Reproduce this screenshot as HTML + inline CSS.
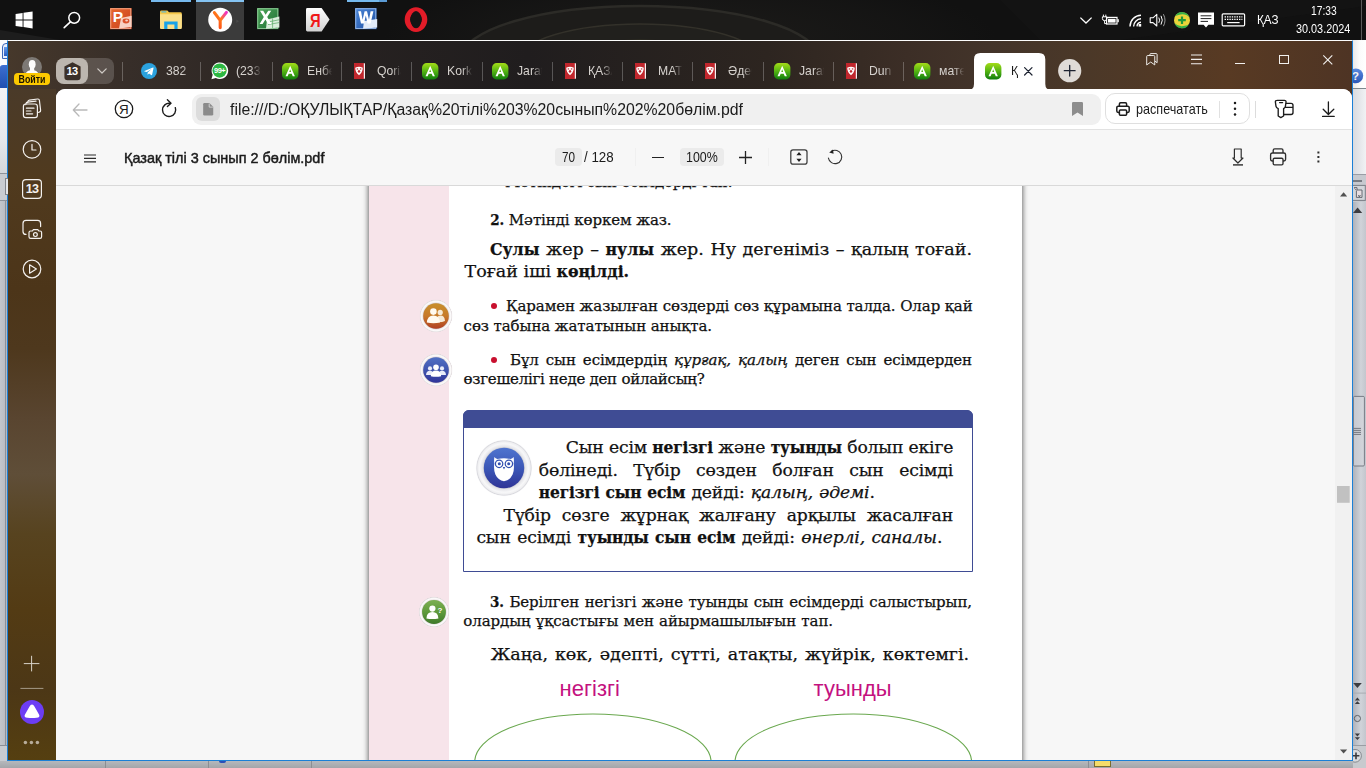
<!DOCTYPE html>
<html lang="kk">
<head>
<meta charset="utf-8">
<title>Қазақ тілі 3 сынып 2 бөлім.pdf</title>
<style>
*{box-sizing:border-box;margin:0;padding:0}
html,body{width:1366px;height:768px;overflow:hidden;background:#aeb2b8;font-family:"Liberation Sans",sans-serif;}
.abs{position:absolute}
#root{position:absolute;left:0;top:0;width:1366px;height:768px;overflow:hidden}
.ui{position:absolute;white-space:nowrap;font-family:"Liberation Sans",sans-serif;color:#1b1b1b;transform-origin:0 50%}
.ic{position:absolute;overflow:visible}
/* ---------- background windows (Word behind) ---------- */
#bgleft{left:0;top:40px;width:8px;height:728px;background:linear-gradient(90deg,#c4c8cf,#b4b8bf)}
#bgright{left:1353px;top:40px;width:13px;height:728px;background:linear-gradient(90deg,#aeb2ba,#d0d3d9 60%,#c3c6cd)}
#bgbottom{left:0;top:761px;width:1366px;height:7px;background:linear-gradient(180deg,#b5b8bc,#a3a6aa)}
/* ---------- taskbar ---------- */
#taskbar{left:0;top:0;width:1366px;height:40px;background:#111111;overflow:hidden}
#taskbar .glow{left:380px;top:-30px;width:620px;height:140px;border-radius:50%;background:radial-gradient(ellipse at center,rgba(40,38,34,.5),rgba(30,29,27,.3) 50%,rgba(17,17,17,0) 70%)}
/* ---------- browser window ---------- */
#win{left:7px;top:40px;width:1346px;height:721px;background:#3a2f28;border-left:1px solid #1a7fd6;border-right:1px solid #1a7fd6;border-bottom:1px solid #1a7fd6;border-top:1px solid #fdfdfd;overflow:hidden}
#chrome{left:0;top:0;width:1344px;height:719px;background:
 linear-gradient(90deg,#46382b 0px,#372e29 120px,#272221 330px,#201d1e 520px,#2d2520 760px,#3c2e26 900px,#43342a 980px,#4b3828 1080px,#583a23 1220px,#4e3424 1344px)}
#side{left:0;top:48px;width:48px;height:671px;background:linear-gradient(180deg,#4a3a29 0,#503a1e 90px,#4c3519 200px,#4e381d 260px,#594530 330px,#5f4e38 385px,#57431f 445px,#533b14 520px,#4c3716 600px,#553f10 671px)}
#content{left:48px;top:48px;width:1296px;height:671px;background:#f7f7f7;border-top-left-radius:9px;border-top-right-radius:9px;overflow:hidden}
#toolbar{left:0;top:0;width:1296px;height:41px;background:#ffffff;border-bottom:1px solid #e2e2e2}
#pdfbar{left:0;top:41px;width:1296px;height:56px;background:#f7f7f7;border-bottom:1px solid #d9d9d9}
#viewer{left:0;top:97px;width:1296px;height:574px;background:#f7f7f7;overflow:hidden}
</style>
</head>
<body>
<div id="root">
<div id="bgleft" class="abs"></div>
<div id="bgright" class="abs"></div>
<div id="bgbottom" class="abs"></div>

<div id="taskbar" class="abs"><div class="glow abs"></div>
<svg class="ic" style="left:0;top:0;overflow:hidden" width="1366" height="40" viewBox="0 0 1366 40"><g fill="none"><ellipse cx="640" cy="58" rx="178" ry="52" fill="#1d1c1a" stroke="#2c2b27" stroke-width="2.5"/><ellipse cx="640" cy="60" rx="120" ry="36" fill="#21201d" stroke="#33312a" stroke-width="1.5"/><ellipse cx="640" cy="62" rx="70" ry="22" fill="#24231e" stroke="#363327" stroke-width="1.2"/><path d="M0,30 L60,40 H0Z" fill="#1d1d1d"/><path d="M1000,0 L1366,0 L1366,6 L1120,40 L1040,40Z" fill="#161616" opacity=".6"/></g></svg>

<!-- active indicators -->
<div class="abs" style="left:151px;top:0;width:40px;height:2px;background:#76b9ed"></div>
<div class="abs" style="left:196px;top:0;width:48px;height:40px;background:#3b3b3b"></div>
<div class="abs" style="left:196px;top:0;width:48px;height:2px;background:#84c3f2"></div>
<div class="abs" style="left:347px;top:0;width:31.5px;height:2px;background:#76b9ed"></div>
<div class="abs" style="left:378.5px;top:0;width:8.5px;height:2px;background:#5b9bd5"></div>
<svg class="ic" style="left:0;top:0" width="1366" height="40" viewBox="0 0 1366 40">
 <!-- windows logo -->
 <g fill="#fff"><path d="M15.6,13.9 L22.6,12.9 V19.5 H15.6Z M23.5,12.8 L32.6,11.5 V19.5 H23.5Z M15.6,20.4 H22.6 V27 L15.6,26Z M23.5,20.4 H32.6 V28.4 L23.5,27.1Z"/></g>
 <!-- search -->
 <circle cx="74.2" cy="17.8" r="5.4" fill="none" stroke="#fff" stroke-width="1.5"/><path d="M70.4,21.8 L64.2,27.6" stroke="#fff" stroke-width="1.6" stroke-linecap="round"/>
 <!-- powerpoint -->
 <defs>
  <linearGradient id="ppg" x1="0" y1="0" x2="1" y2="1"><stop offset="0" stop-color="#e8682e"/><stop offset="1" stop-color="#c8401c"/></linearGradient>
  <linearGradient id="xlg" x1="0" y1="0" x2="1" y2="1"><stop offset="0" stop-color="#4ea65a"/><stop offset="1" stop-color="#1d6e34"/></linearGradient>
  <linearGradient id="wdg" x1="0" y1="0" x2="1" y2="1"><stop offset="0" stop-color="#4a86d8"/><stop offset="1" stop-color="#1f4fa0"/></linearGradient>
  <linearGradient id="yag" x1="0" y1="0" x2="0" y2="1"><stop offset="0" stop-color="#ffffff"/><stop offset="1" stop-color="#d2d2d2"/></linearGradient>
  <linearGradient id="yyg" x1="0" y1="1" x2="1" y2="0"><stop offset="0" stop-color="#ff3a1a"/><stop offset=".55" stop-color="#ff7a1a"/><stop offset="1" stop-color="#f030c8"/></linearGradient>
 </defs>
 <rect x="110" y="8" width="21.6" height="21.2" fill="url(#ppg)"/>
 <rect x="110.8" y="8.8" width="20" height="19.6" fill="none" stroke="#f6b59a" stroke-width=".8"/>
 <path d="M121,18 L131.6,15.8 V27 L119,28.6Z" fill="#f7d2c4"/>
 <ellipse cx="126" cy="21" rx="3.4" ry="2.4" fill="#d9532c"/><ellipse cx="126.6" cy="20.6" rx="1.4" ry="1" fill="#f7d2c4"/>
 <text x="118" y="22.4" text-anchor="middle" font-family="Liberation Sans,sans-serif" font-size="15.5" font-weight="bold" fill="#fff">P</text>
 <!-- explorer -->
 <path d="M160,12 Q160,10.6 161.4,10.6 H167.4 L169,12.2 H180.4 Q181.8,12.2 181.8,13.6 V27.4 H160Z" fill="#f5c84b"/>
 <path d="M160,14.2 H181.8 V28 Q181.8,29 180.8,29 H161 Q160,29 160,28Z" fill="#fbe08a"/>
 <path d="M164.2,29 V21.4 H177.6 V29 H174.4 V24.6 H167.4 V29Z" fill="#18a3e8"/>
 <rect x="161.4" y="11.4" width="5" height="1" fill="#3fb3e8"/>
 <!-- yandex browser -->
 <circle cx="220.2" cy="19.8" r="12" fill="#fff"/>
 <path d="M214.4,12.6 L220.2,20.4 V27.6 M220.2,20.4 L226.4,12.4" fill="none" stroke="url(#yyg)" stroke-width="3.1" stroke-linecap="round" stroke-linejoin="round"/>
 <path d="M236.4,19.4 L239,21.2 L236.4,23Z" fill="#4a4a4a"/>
 <!-- excel -->
 <rect x="257" y="8" width="21.6" height="21.2" fill="url(#xlg)"/>
 <rect x="257.8" y="8.8" width="20" height="19.6" fill="none" stroke="#9fd3a6" stroke-width=".8"/>
 <path d="M267,19.4 L279.4,16.6 V27.4 L266,28.8Z" fill="#d8eedb"/>
 <path d="M268,22 L279,19.8 M268,24.6 L279,22.6 M272.6,18.4 V28" stroke="#57a866" stroke-width=".7"/>
 <path d="M260,10.8 L263.2,10.8 L265.6,14.8 L268.2,10.8 L271.2,10.8 L267.2,17 L271.6,24 L268.2,24 L265.4,19.4 L262.6,24 L259.6,24 L263.8,17Z" fill="#fff"/>
 <!-- yandex Ya -->
 <path d="M307.4,8 H321.6 L329.6,19.6 L321.6,31.4 H307.4 Q306,31.4 306,30 V9.4 Q306,8 307.4,8Z" fill="url(#yag)"/>
 <text x="315.4" y="26.6" text-anchor="middle" font-family="Liberation Sans,sans-serif" font-size="18.5" fill="#f01818" font-weight="bold" transform="translate(315.4 0) scale(.8 1) translate(-315.4 0)">Я</text>
 <!-- word -->
 <rect x="355" y="8" width="21.6" height="21.2" fill="url(#wdg)"/>
 <rect x="355.8" y="8.8" width="20" height="19.6" fill="none" stroke="#a9c6ee" stroke-width=".8"/>
 <path d="M364,21 L377.2,19 V27.6 L363,28.8Z" fill="#e2ebf8"/>
 <path d="M358.2,11.2 H361 L362.6,19.8 L364.6,11.2 H367 L369,19.8 L370.6,11.2 H373.4 L370.6,23.4 H367.6 L365.8,15.6 L364,23.4 H361Z" fill="#fff"/>
 <!-- opera -->
 <ellipse cx="416" cy="19.6" rx="8.6" ry="9.6" fill="none" stroke="#e31c28" stroke-width="5.4"/>
 <ellipse cx="416" cy="19.6" rx="5.4" ry="8.6" fill="#151515"/>
 <!-- tray -->
 <path d="M1080.4,17.6 L1086,23 L1091.6,17.6" fill="none" stroke="#fff" stroke-width="1.3"/>
 <!-- battery -->
 <rect x="1106.6" y="17.4" width="10.4" height="6.6" fill="none" stroke="#fff" stroke-width="1.2"/><rect x="1117.4" y="19.2" width="1.4" height="3" fill="#fff"/><rect x="1108" y="18.8" width="7.6" height="3.8" fill="#fff"/>
 <path d="M1103.4,14.6 V16.8 M1105.8,14.6 V16.8 M1102.4,16.8 H1106.8 V18.6 Q1106.8,20.6 1104.6,20.6 Q1102.4,20.6 1102.4,18.6Z M1104.6,20.6 V23.6 H1107" fill="none" stroke="#fff" stroke-width="1"/>
 <!-- network -->
 <g fill="none" stroke="#fff" stroke-width="1.4"><path d="M1130,26.4 A11.4,11.4 0 0 1 1141,15.2"/><path d="M1133.6,26.4 A7.8,7.8 0 0 1 1141,18.8"/><path d="M1137,26.4 A4.4,4.4 0 0 1 1141,22.2"/></g><rect x="1138.6" y="24" width="2.6" height="2.6" fill="#fff"/>
 <!-- volume -->
 <path d="M1150.2,17.8 H1153 L1156.8,14.4 V26 L1153,22.6 H1150.2Z" fill="none" stroke="#fff" stroke-width="1.1" stroke-linejoin="round"/>
 <g fill="none" stroke="#fff" stroke-width="1"><path d="M1158.8,17.6 Q1160.4,20.2 1158.8,22.8"/><path d="M1161,15.8 Q1163.6,20.2 1161,24.6"/><path d="M1163.4,14.2 Q1166.6,20.2 1163.4,26.2" stroke="#9a9a9a"/></g>
 <!-- 360 -->
 <circle cx="1182" cy="20.2" r="8" fill="#e9d43a"/><path d="M1175.2,16 A8,8 0 0 1 1189.6,17.4 Q1186,13.6 1180.6,14.4 Q1177.4,15 1175.2,16Z" fill="#36b24a"/><path d="M1188.8,24.4 A8,8 0 0 1 1174.4,23 Q1178,26.8 1183.4,26 Q1186.6,25.4 1188.8,24.4Z" fill="#36b24a"/>
 <path d="M1178.2,20.2 H1185.8 M1182,16.4 V24" stroke="#1f9a3a" stroke-width="2.2"/>
 <!-- notification -->
 <path d="M1198,12.4 H1214 V24.8 H1208.4 L1206,27.6 L1203.6,24.8 H1198Z" fill="#fff"/>
 <path d="M1200.6,15.8 H1211.4 M1200.6,18.6 H1211.4 M1200.6,21.4 H1208" stroke="#222" stroke-width="1"/>
 <!-- keyboard -->
 <rect x="1222.2" y="13.8" width="22.4" height="12" rx="1" fill="none" stroke="#fff" stroke-width="1.2"/>
 <path d="M1224.6,16.8 H1242.4 M1224.6,19.4 H1242.4" stroke="#fff" stroke-width="1.2" stroke-dasharray="1.4 1"/><path d="M1227.2,22.6 H1239.6" stroke="#fff" stroke-width="1.2"/>
 <rect x="1361" y="0" width="1" height="40" fill="#5a5a5a"/>
</svg>
<div class="ui" style="left:1257.2px;top:10px;font-size:12.4px;line-height:20px;color:#fff;transform:scaleX(.94)">ҚАЗ</div>
<div class="ui" style="left:1311px;top:1.4px;font-size:12.2px;line-height:20px;color:#fff;transform:scaleX(.84)">17:33</div>
<div class="ui" style="left:1296.4px;top:18.6px;font-size:12.2px;line-height:20px;color:#fff;transform:scaleX(.89)">30.03.2024</div>

</div>

<div id="win" class="abs">
 <div id="chrome" class="abs"></div>
 
<style>
.tabt{position:absolute;top:20.9px;height:18px;line-height:18px;font-size:12.6px;font-family:"Liberation Sans",sans-serif;white-space:nowrap;overflow:hidden;transform:scaleX(.97);transform-origin:0 50%;-webkit-mask-image:linear-gradient(90deg,#000 60%,transparent 100%);mask-image:linear-gradient(90deg,#000 60%,transparent 100%)}
</style>
<svg width="0" height="0" style="position:absolute"><defs><linearGradient id="ga" x1="0" y1="0" x2="0" y2="1"><stop offset="0" stop-color="#a4dc18"/><stop offset=".45" stop-color="#5cb814"/><stop offset="1" stop-color="#0f7e0c"/></linearGradient></defs></svg>
<!-- avatar -->
<svg class="ic" style="left:14px;top:15.5px" width="20" height="20" viewBox="-10 -10 20 20"><circle r="10" fill="#7d7975"/><clipPath id="avc"><circle r="10"/></clipPath><g clip-path="url(#avc)" fill="#fdfdfd"><ellipse cx="0.2" cy="-2.8" rx="3.4" ry="4.3"/><path d="M-2,0 H2.2 V3.2 Q6.8,4.2 7.4,10 H-7.4 Q-6.8,4.2 -2,3.2Z"/></g></svg>
<div class="abs" style="left:6px;top:32.4px;width:36px;height:11.4px;background:#fcc900;border-radius:4px"></div>
<div class="abs" style="left:1px;top:32.3px;width:46px;height:13px;text-align:center;font:bold 10.5px/13px 'Liberation Sans',sans-serif;color:#1a1300;transform:scaleX(.84)">Войти</div>
<!-- 13 group pill -->
<div class="abs" style="left:48.4px;top:16.9px;width:57.6px;height:26.2px;border-radius:8px;background:rgba(255,255,255,.17)"></div>
<div class="abs" style="left:48.4px;top:16.9px;width:31.6px;height:26.2px;border-radius:8px;background:#bcb6af"></div>
<svg class="ic" style="left:55.6px;top:20.6px" width="17" height="18.4" viewBox="0 0 17 18.4"><path d="M8.5,0.2 L16.6,4.4 V15 Q16.6,18.2 13.4,18.2 H3.6 Q0.4,18.2 0.4,15 V4.4Z" fill="#3b3029"/></svg>
<div class="abs" style="left:53px;top:22.3px;width:22px;height:16px;text-align:center;font:bold 11px/16px 'Liberation Sans',sans-serif;color:#fff;letter-spacing:-.6px">13</div>
<svg class="ic" style="left:89.4px;top:27px" width="10" height="6" viewBox="0 0 10 6" fill="none" stroke="#cfcac5" stroke-width="1.2" stroke-linecap="round" stroke-linejoin="round"><path d="M0.8,0.8 L5,5 L9.2,0.8"/></svg>
<div class="abs" style="left:114.4px;top:21px;width:1px;height:19px;background:rgba(255,255,255,.25)"></div><svg class="ic" style="left:133px;top:21.8px" width="16" height="16" viewBox="-8 -8 16 16"><circle r="8" fill="#2ba2de"/><path d="M-4.6,0.1 L4,-3.4 Q4.7,-3.6 4.5,-2.7 L3.1,3.7 Q2.9,4.4 2.2,4 L0,2.4 L-1.1,3.5 Q-1.5,3.8 -1.5,3.2 L-1.3,1.4 L2.6,-2.1 L-2.2,0.9 L-4.5,0.6 Q-5,0.3 -4.6,0.1Z" fill="#fff"/></svg><div class="tabt" style="left:157.9px;width:28px;color:#d6d2ce">382</div><div class="abs" style="left:192.4px;top:21px;width:1px;height:19px;background:rgba(255,255,255,.25)"></div><svg class="ic" style="left:202.6px;top:21.4px" width="17.2" height="17.4" viewBox="-8.6 -8.6 17.2 17.4"><path d="M-8.2,8.6 L-6.9,4.2 A8.3,8.3 0 1 1 -3.8,7.3Z" fill="#fff"/><circle r="7.1" fill="#2cb742"/><text x="0" y="2.6" text-anchor="middle" font-family="Liberation Sans,sans-serif" font-size="7.4" font-weight="bold" fill="#fff" letter-spacing="-.4">99+</text></svg><div class="tabt" style="left:228.0px;width:26px;color:#d6d2ce">(233</div><div class="abs" style="left:263.5px;top:21px;width:1px;height:19px;background:rgba(255,255,255,.25)"></div><svg class="ic" style="left:273.8px;top:21.8px" width="16.4" height="16.4" viewBox="0 0 16 16"><rect width="16" height="16" rx="4.6" fill="url(#ga)"/><path d="M8,2.6 L12.6,13 H10.5 L9.5,10.6 H6.5 L5.5,13 H3.4Z M8,6.2 L7.1,8.9 H8.9Z" fill="#fff" fill-rule="evenodd"/></svg><div class="tabt" style="left:299.1px;width:26px;color:#d6d2ce">Енбек</div><div class="abs" style="left:333.0px;top:21px;width:1px;height:19px;background:rgba(255,255,255,.25)"></div><svg class="ic" style="left:345.6px;top:21.9px" width="12" height="16" viewBox="0 0 12 16"><rect width="10.2" height="16" fill="#c1272d"/><rect x="9.8" y="0.3" width="1.2" height="15.4" fill="#f4f4f4"/><rect x="11" y="0.3" width=".6" height="15.4" fill="#3a1414"/><path d="M1.2,4.8 Q5,2.8 8.8,4.8 Q8.6,9.8 5,12.2 Q1.4,9.8 1.2,4.8Z" fill="#fff"/><path d="M5,6.4 L6.5,8.4 L5,10 L3.5,8.4Z M2.6,5.6 L4.4,5.2 L3,7.2Z M7.4,5.6 L5.6,5.2 L7,7.2Z" fill="#c1272d"/></svg><div class="tabt" style="left:368.6px;width:25px;color:#d6d2ce">Qoria</div><div class="abs" style="left:403.4px;top:21px;width:1px;height:19px;background:rgba(255,255,255,.25)"></div><svg class="ic" style="left:413.7px;top:21.8px" width="16.4" height="16.4" viewBox="0 0 16 16"><rect width="16" height="16" rx="4.6" fill="url(#ga)"/><path d="M8,2.6 L12.6,13 H10.5 L9.5,10.6 H6.5 L5.5,13 H3.4Z M8,6.2 L7.1,8.9 H8.9Z" fill="#fff" fill-rule="evenodd"/></svg><div class="tabt" style="left:439.0px;width:26px;color:#d6d2ce">Kork</div><div class="abs" style="left:473.7px;top:21px;width:1px;height:19px;background:rgba(255,255,255,.25)"></div><svg class="ic" style="left:484.0px;top:21.8px" width="16.4" height="16.4" viewBox="0 0 16 16"><rect width="16" height="16" rx="4.6" fill="url(#ga)"/><path d="M8,2.6 L12.6,13 H10.5 L9.5,10.6 H6.5 L5.5,13 H3.4Z M8,6.2 L7.1,8.9 H8.9Z" fill="#fff" fill-rule="evenodd"/></svg><div class="tabt" style="left:509.3px;width:26px;color:#d6d2ce">Jarat</div><div class="abs" style="left:544.0px;top:21px;width:1px;height:19px;background:rgba(255,255,255,.25)"></div><svg class="ic" style="left:556.6px;top:21.9px" width="12" height="16" viewBox="0 0 12 16"><rect width="10.2" height="16" fill="#c1272d"/><rect x="9.8" y="0.3" width="1.2" height="15.4" fill="#f4f4f4"/><rect x="11" y="0.3" width=".6" height="15.4" fill="#3a1414"/><path d="M1.2,4.8 Q5,2.8 8.8,4.8 Q8.6,9.8 5,12.2 Q1.4,9.8 1.2,4.8Z" fill="#fff"/><path d="M5,6.4 L6.5,8.4 L5,10 L3.5,8.4Z M2.6,5.6 L4.4,5.2 L3,7.2Z M7.4,5.6 L5.6,5.2 L7,7.2Z" fill="#c1272d"/></svg><div class="tabt" style="left:579.6px;width:25px;color:#d6d2ce">ҚАЗА</div><div class="abs" style="left:614.0px;top:21px;width:1px;height:19px;background:rgba(255,255,255,.25)"></div><svg class="ic" style="left:626.6px;top:21.9px" width="12" height="16" viewBox="0 0 12 16"><rect width="10.2" height="16" fill="#c1272d"/><rect x="9.8" y="0.3" width="1.2" height="15.4" fill="#f4f4f4"/><rect x="11" y="0.3" width=".6" height="15.4" fill="#3a1414"/><path d="M1.2,4.8 Q5,2.8 8.8,4.8 Q8.6,9.8 5,12.2 Q1.4,9.8 1.2,4.8Z" fill="#fff"/><path d="M5,6.4 L6.5,8.4 L5,10 L3.5,8.4Z M2.6,5.6 L4.4,5.2 L3,7.2Z M7.4,5.6 L5.6,5.2 L7,7.2Z" fill="#c1272d"/></svg><div class="tabt" style="left:649.6px;width:25px;color:#d6d2ce">МАТЕ</div><div class="abs" style="left:684.4px;top:21px;width:1px;height:19px;background:rgba(255,255,255,.25)"></div><svg class="ic" style="left:697.0px;top:21.9px" width="12" height="16" viewBox="0 0 12 16"><rect width="10.2" height="16" fill="#c1272d"/><rect x="9.8" y="0.3" width="1.2" height="15.4" fill="#f4f4f4"/><rect x="11" y="0.3" width=".6" height="15.4" fill="#3a1414"/><path d="M1.2,4.8 Q5,2.8 8.8,4.8 Q8.6,9.8 5,12.2 Q1.4,9.8 1.2,4.8Z" fill="#fff"/><path d="M5,6.4 L6.5,8.4 L5,10 L3.5,8.4Z M2.6,5.6 L4.4,5.2 L3,7.2Z M7.4,5.6 L5.6,5.2 L7,7.2Z" fill="#c1272d"/></svg><div class="tabt" style="left:720.0px;width:25px;color:#d6d2ce">Әдеб</div><div class="abs" style="left:755.2px;top:21px;width:1px;height:19px;background:rgba(255,255,255,.25)"></div><svg class="ic" style="left:765.5px;top:21.8px" width="16.4" height="16.4" viewBox="0 0 16 16"><rect width="16" height="16" rx="4.6" fill="url(#ga)"/><path d="M8,2.6 L12.6,13 H10.5 L9.5,10.6 H6.5 L5.5,13 H3.4Z M8,6.2 L7.1,8.9 H8.9Z" fill="#fff" fill-rule="evenodd"/></svg><div class="tabt" style="left:790.8px;width:26px;color:#d6d2ce">Jarat</div><div class="abs" style="left:825.0px;top:21px;width:1px;height:19px;background:rgba(255,255,255,.25)"></div><svg class="ic" style="left:837.6px;top:21.9px" width="12" height="16" viewBox="0 0 12 16"><rect width="10.2" height="16" fill="#c1272d"/><rect x="9.8" y="0.3" width="1.2" height="15.4" fill="#f4f4f4"/><rect x="11" y="0.3" width=".6" height="15.4" fill="#3a1414"/><path d="M1.2,4.8 Q5,2.8 8.8,4.8 Q8.6,9.8 5,12.2 Q1.4,9.8 1.2,4.8Z" fill="#fff"/><path d="M5,6.4 L6.5,8.4 L5,10 L3.5,8.4Z M2.6,5.6 L4.4,5.2 L3,7.2Z M7.4,5.6 L5.6,5.2 L7,7.2Z" fill="#c1272d"/></svg><div class="tabt" style="left:860.6px;width:25px;color:#d6d2ce">Dun</div><div class="abs" style="left:895.2px;top:21px;width:1px;height:19px;background:rgba(255,255,255,.25)"></div><svg class="ic" style="left:905.5px;top:21.8px" width="16.4" height="16.4" viewBox="0 0 16 16"><rect width="16" height="16" rx="4.6" fill="url(#ga)"/><path d="M8,2.6 L12.6,13 H10.5 L9.5,10.6 H6.5 L5.5,13 H3.4Z M8,6.2 L7.1,8.9 H8.9Z" fill="#fff" fill-rule="evenodd"/></svg><div class="tabt" style="left:930.8px;width:26px;color:#d6d2ce">мате</div>
<svg class="ic" style="left:959.8px;top:11.7px" width="84" height="37" viewBox="0 0 84 37"><path d="M0,37 Q6,37 6,31 V6.4 Q6,0 12.4,0 H70.9 Q77.3,0 77.3,6.4 V31 Q77.3,37 83.3,37 Z" fill="#ffffff"/></svg>
<svg class="ic" style="left:977.0px;top:21.8px" width="16.4" height="16.4" viewBox="0 0 16 16"><rect width="16" height="16" rx="4.6" fill="url(#ga)"/><path d="M8,2.6 L12.6,13 H10.5 L9.5,10.6 H6.5 L5.5,13 H3.4Z M8,6.2 L7.1,8.9 H8.9Z" fill="#fff" fill-rule="evenodd"/></svg><div class="abs" style="left:1002.6px;top:20.6px;font:13.4px/18px 'Liberation Sans',sans-serif;color:#1b1b1b;transform:scaleX(.9);transform-origin:0 50%">Қ</div>
<svg class="ic" style="left:1015.8px;top:25.8px" width="8.6" height="8.6" viewBox="0 0 8.6 8.6" stroke="#1c2230" stroke-width="1.2" stroke-linecap="round"><path d="M0.6,0.6 L8,8 M8,0.6 L0.6,8"/></svg>
<!-- new tab -->
<svg class="ic" style="left:1049.9px;top:17.8px" width="23.4" height="23.4" viewBox="-11.7 -11.7 23.4 23.4"><circle r="11.6" fill="#dfdbd7"/><path d="M-5.4,0 H5.4 M0,-5.4 V5.4" stroke="#1c2230" stroke-width="1.3" stroke-linecap="round"/></svg>
<!-- window controls -->
<svg class="ic" style="left:1137.8px;top:11.6px" width="11.8" height="12.6" viewBox="0 0 14 15" fill="none" stroke="#f2f0ee" stroke-width="1.15" stroke-linejoin="round"><path d="M4.6,3 V1.8 Q4.6,0.7 5.8,0.7 H12 Q13.2,0.7 13.2,1.8 V11.6 L10.6,9.6"/><path d="M0.8,4.2 Q0.8,3 2,3 H9.2 Q10.4,3 10.4,4.2 V14.2 L5.6,10.8 L0.8,14.2Z"/></svg>
<svg class="ic" style="left:1182.6px;top:12.6px" width="11" height="11" viewBox="0 0 11 11" stroke="#f2f0ee" stroke-width="1.1"><path d="M0,1 H11 M0,5.4 H11 M0,9.8 H11"/></svg>
<div class="abs" style="left:1227px;top:22px;width:10px;height:1.1px;background:#f2f0ee"></div>
<div class="abs" style="left:1271.4px;top:13.8px;width:9.4px;height:9.2px;border:1.1px solid #f2f0ee"></div>
<svg class="ic" style="left:1315.2px;top:13.6px" width="9.6" height="9.6" viewBox="0 0 9.6 9.6" stroke="#f2f0ee" stroke-width="1.1"><path d="M0.3,0.3 L9.3,9.3 M9.3,0.3 L0.3,9.3"/></svg>

 <div id="side" class="abs">
 
<svg class="ic" style="left:0;top:0" width="48" height="671" viewBox="8 89 48 671" fill="none" stroke="#f4f1ee" stroke-width="1.2" stroke-linecap="round" stroke-linejoin="round">
 <!-- tabs -->
 <path d="M27.6,102.6 L27.8,101.8 Q28,100.4 29.4,100.2 L37.6,99 Q39.2,98.8 39.4,100.4 L40.6,110.2 Q40.8,111.8 39.2,112.2 L38.6,112.3"/>
 <path d="M25.8,104.6 L26,103.6 Q26.2,102.4 27.6,102.2 L36,101.2"/>
 <rect x="23.4" y="104" width="14" height="13.6" rx="2.4"/>
 <path d="M26.4,108.2 H34 M26.4,111 H31 M26.4,113.8 H32.6"/>
 <!-- clock -->
 <circle cx="32" cy="149.4" r="8.8"/><path d="M32,144.4 V150 H36"/>
 <!-- 13 -->
 <rect x="22.6" y="179.6" width="18.8" height="18.8" rx="3.4"/>
 <!-- screenshot -->
 <path d="M26,234.4 Q23,234.4 23,231.4 V223.4 Q23,220.4 26,220.4 H37.6 Q40.6,220.4 40.6,223.4 V226.6"/>
 <path d="M30.6,231 H32.4 L33.4,229.6 H37.8 L38.8,231 H40 Q41.6,231 41.6,232.6 V236.8 Q41.6,238.4 40,238.4 H30.6 Q29,238.4 29,236.8 V232.6 Q29,231 30.6,231Z"/>
 <circle cx="35.4" cy="234.6" r="1.9"/>
 <!-- play -->
 <circle cx="32" cy="269" r="8.8"/><path d="M29.6,264.8 L36.4,269 L29.6,273.2Z"/>
 <!-- plus -->
 <path d="M24.2,663.6 H39 M31.6,656.2 V671" stroke="#d8d2c8" stroke-width="1"/>
 <path d="M20.8,688.4 H43" stroke="#a59a88" stroke-width="1"/>
</svg>
<div class="abs" style="left:13px;top:90px;width:22px;height:20px;text-align:center;font:bold 12.6px/20px 'Liberation Sans',sans-serif;color:#f4f1ee;letter-spacing:-.7px">13</div>
<svg class="ic" style="left:11.8px;top:611px" width="24" height="24" viewBox="-12 -12 24 24"><circle r="12" fill="#6c3df4"/><path d="M0,-7.4 Q1.4,-7.4 2.6,-5.2 L7,2.6 Q8.6,5.6 4.6,5.8 Q0,6.2 -4.6,5.8 Q-8.6,5.6 -7,2.6 L-2.6,-5.2 Q-1.4,-7.4 0,-7.4Z" fill="#fff"/></svg>
<svg class="ic" style="left:15.4px;top:650.6px" width="18" height="5" viewBox="0 0 18 5" fill="#b7ac9a"><circle cx="2.4" cy="2.4" r="1.75"/><circle cx="8.4" cy="2.4" r="1.75"/><circle cx="14.4" cy="2.4" r="1.75"/></svg>

 </div>
 <div id="content" class="abs">
  <div id="toolbar" class="abs">
  

  <!-- back arrow -->
  <svg class="ic" style="left:16px;top:13px" width="16" height="16" viewBox="0 0 16 16" fill="none" stroke="#b9b9b9" stroke-width="1.3" stroke-linecap="round" stroke-linejoin="round"><path d="M15,8 H1.5 M7,2 L1.3,8 L7,14"/></svg>
  <!-- Ya -->
  <svg class="ic" style="left:58px;top:10px" width="20" height="20" viewBox="-10 -10 20 20"><circle r="8.7" fill="none" stroke="#1b1b1b" stroke-width="1.3"/><text x="-0.2" y="4.7" text-anchor="middle" font-family="Liberation Sans,sans-serif" font-size="13.4" fill="#1b1b1b">Я</text></svg>
  <!-- reload -->
  <svg class="ic" style="left:103px;top:9px" width="20" height="22" viewBox="-10 -11 20 22" fill="none" stroke="#1b1b1b" stroke-width="1.4" stroke-linecap="round" stroke-linejoin="round"><path d="M1.2,-5.6 A6.6,6.6 0 1 0 6.3,-1.4"/><path d="M-1.6,-9.2 L2,-5.7 L-1.6,-2.4"/></svg>
  <!-- url field -->
  <div class="abs" style="left:136px;top:4.5px;width:909px;height:31px;background:#f0f0f0;border-radius:9px"></div>
  <div class="abs" style="left:140px;top:8.3px;width:24px;height:23.6px;background:#dcdcdc;border-radius:6px"></div>
  <svg class="ic" style="left:146.8px;top:13.6px" width="10.4" height="12.6" viewBox="0 0 12 15"><path d="M1.6,0 H7.4 L12,4.6 V13.4 Q12,15 10.4,15 H1.6 Q0,15 0,13.4 V1.6 Q0,0 1.6,0Z" fill="#8b8b8b"/><path d="M7.2,0.6 V4.9 H11.6" fill="none" stroke="#dcdcdc" stroke-width="1"/></svg>
  <div class="ui" id="urltxt" style="left:174.2px;top:10.8px;font-size:16px;line-height:20px;transform:scaleX(.988)">file:///D:/ОҚУЛЫҚТАР/Қазақ%20тілі%203%20сынып%202%20бөлім.pdf</div>
  <svg class="ic" style="left:1016px;top:12.6px" width="11" height="14" viewBox="0 0 11 14"><path d="M1.2,0 H9.8 Q11,0 11,1.2 V14 L5.5,10.4 L0,14 V1.2 Q0,0 1.2,0Z" fill="#8d8d8d"/></svg>
  <!-- print button -->
  <div class="abs" style="left:1049.3px;top:3.8px;width:145.2px;height:31.4px;border:1px solid #dfdfdf;border-radius:10px;background:#fff"></div>
  <svg class="ic" style="left:1060px;top:13px" width="14" height="14" viewBox="0 0 14 14" fill="none" stroke="#1b1b1b" stroke-width="1.5" stroke-linejoin="round"><path d="M3.4,4.2 V2 Q3.4,0.8 4.6,0.8 H9.4 Q10.6,0.8 10.6,2 V4.2"/><path d="M3.4,10.4 H2.2 Q0.8,10.4 0.8,9 V5.6 Q0.8,4.2 2.2,4.2 H11.8 Q13.2,4.2 13.2,5.6 V9 Q13.2,10.4 11.8,10.4 H10.6"/><rect x="3.4" y="8" width="7.2" height="5.2" rx="1"/></svg>
  <div class="ui" id="prtxt" style="left:1079.7px;top:10px;font-size:15px;line-height:20px;transform:scaleX(.84)">распечатать</div>
  <div class="abs" style="left:1162.5px;top:12px;width:1px;height:17px;background:#e1e1e1"></div>
  <svg class="ic" style="left:1176.5px;top:11px" width="4" height="18" viewBox="0 0 4 18" fill="#1b1b1b"><circle cx="2" cy="3" r="1.25"/><circle cx="2" cy="8.8" r="1.25"/><circle cx="2" cy="14.6" r="1.25"/></svg>
  <div class="abs" style="left:1199px;top:12px;width:1px;height:17px;background:#dcdcdc"></div>
  <!-- collections icon -->
  <svg class="ic" style="left:1214px;top:7px" width="30" height="26" viewBox="1270 96 30 26" fill="none" stroke="#1b1b1b" stroke-width="1.35" stroke-linejoin="round" stroke-linecap="round"><path d="M1286,103.4 H1291 Q1293,103.4 1293,105.4 V112.5 Q1293,114.5 1291,114.5 H1283.8 M1285.6,107.3 H1293"/><path d="M1277.4,100.4 H1284.4 Q1286.3,100.4 1286.0,102.2 L1285.4,106.4 Q1285.2,107.8 1283.6,108.6 V116 L1280.8,117.6 L1278.2,116 V108.6 Q1276.2,107.8 1276,106.4 L1275.4,102.2 Q1275.1,100.4 1277.4,100.4 Z" fill="#fff"/><path d="M1279.6,102.6 H1282.6"/></svg>
  <!-- download -->
  <svg class="ic" style="left:1260px;top:7px" width="24" height="26" viewBox="1316 96 24 26" fill="none" stroke="#1b1b1b" stroke-width="1.3" stroke-linecap="round" stroke-linejoin="round"><path d="M1328.4,101.9 V114.3 M1323.2,109.2 L1328.4,114.5 L1333.8,109.2 M1322.6,116.4 H1334.2"/></svg>

  </div>
  <div id="pdfbar" class="abs">
  
  <svg class="ic" style="left:28px;top:23.6px" width="12" height="9" viewBox="0 0 12 9" stroke="#2a2a2a" stroke-width="1.15"><path d="M0,1 H12 M0,4.4 H12 M0,7.8 H12"/></svg>
  <div class="ui" id="ttl" style="left:68.4px;top:17.6px;font-size:14.2px;line-height:20px;-webkit-text-stroke:.45px #1b1b1b;transform:scaleX(1.017)">Қазақ тілі 3 сынып 2 бөлім.pdf</div>
  <div class="abs" style="left:499px;top:18.2px;width:26.6px;height:17.8px;background:#ebebeb;border-radius:4px"></div>
  <div class="ui" id="pg70" style="left:506px;top:17.3px;font-size:14.5px;line-height:20px;transform:scaleX(.81)">70</div>
  <div class="ui" id="pg128" style="left:528.3px;top:17.3px;font-size:14.5px;line-height:20px;word-spacing:0;transform:scaleX(.92)">/ 128</div>
  <div class="abs" style="left:579px;top:18px;width:1px;height:18px;background:#f0f0f0"></div>
  <div class="abs" style="left:596px;top:27px;width:12px;height:1.3px;background:#222"></div>
  <div class="abs" style="left:624px;top:18.2px;width:43.7px;height:17.8px;background:#ebebeb;border-radius:4px"></div>
  <div class="ui" id="zm" style="left:630.3px;top:17.3px;font-size:14.5px;line-height:20px;transform:scaleX(.855)">100%</div>
  <svg class="ic" style="left:683px;top:21px" width="13" height="13" viewBox="0 0 13 13" stroke="#222" stroke-width="1.3"><path d="M0,6.5 H13 M6.5,0 V13"/></svg>
  <div class="abs" style="left:711.5px;top:18px;width:1px;height:18px;background:#f0f0f0"></div>
  <svg class="ic" style="left:733.5px;top:19px" width="18" height="16" viewBox="0 0 18 16"><rect x="0.8" y="0.8" width="16.2" height="14.4" rx="2.2" fill="none" stroke="#3a3a3a" stroke-width="1.25"/><path d="M9,3 L11.6,6.2 H6.4Z M9,13 L11.6,9.8 H6.4Z" fill="#222"/></svg>
  <svg class="ic" style="left:766px;top:14px" width="26" height="26" viewBox="822 144 26 26" fill="none" stroke="#333" stroke-width="1.15" stroke-linecap="round"><path d="M831.4,151.3 A6.7,6.7 0 1 1 828.4,158"/><path d="M833,149.4 L829.2,152.6 L833.6,153.8Z" fill="#222" stroke="none"/></svg>
  <!-- right icons -->
  <svg class="ic" style="left:1170px;top:14px" width="24" height="26" viewBox="1226 144 24 26" fill="none" stroke="#2e2e2e" stroke-width="1.2" stroke-linejoin="round" stroke-linecap="round"><path d="M1234.4,149 H1241.2 V158 H1243 L1237.9,163 L1232.9,158 H1234.4Z"/><path d="M1233,164.9 H1243" stroke="#555" stroke-width="1.6" stroke-linecap="butt"/></svg>
  <svg class="ic" style="left:1208px;top:14px" width="28" height="26" viewBox="1264 144 28 26" fill="none" stroke="#2e2e2e" stroke-width="1.35" stroke-linejoin="round"><path d="M1273.2,153 V150.4 Q1273.2,148.9 1274.7,148.9 H1281.5 Q1283,148.9 1283,150.4 V153"/><path d="M1273.2,161 H1272.4 Q1270.6,161 1270.6,159.2 V154.8 Q1270.6,153 1272.4,153 H1283.8 Q1285.6,153 1285.6,154.8 V159.2 Q1285.6,161 1283.8,161 H1283"/><rect x="1273.2" y="158.2" width="9.8" height="6.6" rx="1.3"/></svg>
  <svg class="ic" style="left:1260.6px;top:20px" width="3" height="14" viewBox="0 0 3 14" fill="#2e2e2e"><rect x=".4" y="1.5" width="2" height="2"/><rect x=".4" y="6" width="2" height="2"/><rect x=".4" y="10.5" width="2" height="2"/></svg>

  </div>
  <div id="viewer" class="abs">
  
<style>
#page{left:313px;top:-40px;width:653px;height:700px;background:#fff;box-shadow:0 0 5px 1px rgba(0,0,0,.55)}
#pink{left:0;top:0;width:80px;height:700px;background:#f7e4ea}
.ln{position:absolute;white-space:nowrap;font-family:"DejaVu Serif","Liberation Serif",serif;color:#111;line-height:24px;height:24px;-webkit-text-stroke:.25px #111}
.ln.j{text-align:justify;text-align-last:justify}
.s15{font-size:15px;letter-spacing:-.1px}
.s17{font-size:17.5px}
.s17b{font-size:17.2px;letter-spacing:-.15px}
.ln b{font-weight:bold;font-family:"DejaVu Serif Condensed","DejaVu Serif","Liberation Serif",serif}
.ln i{font-style:italic}
.bul{position:absolute;width:6px;height:6px;border-radius:50%;background:#c8102e}
#box{left:94px;top:263.5px;width:510px;height:162.5px;border:1.3px solid #3f4c94;border-top-left-radius:6px;border-top-right-radius:6px;background:#fff}
#boxhd{left:94px;top:263.5px;width:510px;height:18px;background:#3f4c94;border-top-left-radius:6px;border-top-right-radius:6px}
.mag{position:absolute;font-family:"Liberation Sans",sans-serif;font-size:22px;color:#c4117f;white-space:nowrap;line-height:24px}
</style>
<div id="page" class="abs">
 <div id="pink" class="abs"></div>
 <!-- page-local coords: x = X-369, y = Y-146 -->
 <div class="ln s15" style="left:136px;top:24px">Мәтіндегі сын есімдерді тап.</div>
 <div class="ln s15 j" style="left:121.3px;top:62px;width:180.4px"><b>2.</b> Мәтінді көркем жаз.</div>
 <div class="ln s17 j" style="left:121px;top:91px;width:482px"><b>Сулы</b> жер – <b>нулы</b> жер. Ну дегеніміз – қалың тоғай.</div>
 <div class="ln s17 j" style="left:95.5px;top:113px;width:164.5px">Тоғай іші <b>көңілді.</b></div>
 <div class="bul" style="left:121.5px;top:157px"></div>
 <div class="ln s15 j" style="left:137px;top:148px;width:466px">Қарамен жазылған сөздерді сөз құрамына талда. Олар қай</div>
 <div class="ln s15 j" style="left:94.6px;top:168px;width:247.4px">сөз табына жататынын анықта.</div>
 <div class="bul" style="left:121.5px;top:210.5px"></div>
 <div class="ln s15 j" style="left:141px;top:202px;width:462px">Бұл сын есімдердің <i>құрғақ, қалың</i> деген сын есімдерден</div>
 <div class="ln s15 j" style="left:94.6px;top:221px;width:240.8px;letter-spacing:-.28px">өзгешелігі неде деп ойлайсың?</div>

 <div id="box" class="abs"></div>
 <div id="boxhd" class="abs"></div>
 
 <svg class="abs" style="left:104.6px;top:292px" width="60" height="60" viewBox="-30 -30 60 60">
  <defs>
   <linearGradient id="owlg" x1="0" y1="0" x2="0" y2="1"><stop offset="0" stop-color="#4f74cf"/><stop offset=".55" stop-color="#3a54b4"/><stop offset="1" stop-color="#2f3496"/></linearGradient>
   <radialGradient id="ringg" cx=".5" cy=".5" r=".5"><stop offset=".70" stop-color="#bfc0c8"/><stop offset=".76" stop-color="#e6e6ea"/><stop offset=".86" stop-color="#f8f8f9"/><stop offset=".93" stop-color="#efeff1"/><stop offset=".965" stop-color="#d9d9de"/><stop offset="1" stop-color="#f0f0f3" stop-opacity=".3"/></radialGradient>
  </defs>
  <circle r="28.2" fill="url(#ringg)"/>
  <circle r="20.2" fill="url(#owlg)"/>
  <path d="M-9.6,-11 Q-8.6,-9.6 -6.6,-9 Q0,-10.4 6.6,-9 Q8.6,-9.6 9.6,-11 Q10.2,-8 9.7,-4.6 Q10.6,2 8.6,6.6 Q6,12.4 0,13.2 Q-6,12.4 -8.6,6.6 Q-10.6,2 -9.7,-4.6 Q-10.2,-8 -9.6,-11Z" fill="#fff"/>
  <circle cx="-4.9" cy="-4.2" r="3.7" fill="#fff" stroke="#3350b0" stroke-width="1.25"/>
  <circle cx="4.9" cy="-4.2" r="3.7" fill="#fff" stroke="#3350b0" stroke-width="1.25"/>
  <circle cx="-4.7" cy="-4.2" r="1.5" fill="#3350b0"/>
  <circle cx="4.7" cy="-4.2" r="1.5" fill="#3350b0"/>
  <path d="M-1.2,-1 L1.2,-1 L0,1.6Z" fill="#3350b0"/>
 </svg>

 <div class="ln s17b j" style="left:196.8px;top:289px;width:387.2px">Сын есім <b>негізгі</b> және <b>туынды</b> болып екіге</div>
 <div class="ln s17b j" style="left:169.8px;top:312px;width:414.2px">бөлінеді. Түбір сөзден болған сын есімді</div>
 <div class="ln s17b j" style="left:169.8px;top:334px;width:336px"><b>негізгі сын есім</b> дейді: <i>қалың, әдемі</i>.</div>
 <div class="ln s17b j" style="left:134.6px;top:357px;width:449.4px">Түбір сөзге жұрнақ жалғану арқылы жасалған</div>
 <div class="ln s17b j" style="left:107.4px;top:379px;width:465.9px">сын есімді <b>туынды сын есім</b> дейді: <i>өнерлі, саналы</i>.</div>

 <div class="ln s15 j" style="left:121px;top:444px;width:482px"><b>3.</b> Берілген негізгі және туынды сын есімдерді салыстырып,</div>
 <div class="ln s15 j" style="left:94.3px;top:463px;width:369.7px">олардың ұқсастығы мен айырмашылығын тап.</div>
 <div class="ln s17 j" style="left:121.7px;top:496px;width:478.5px">Жаңа, көк, әдепті, сүтті, атақты, жүйрік, көктемгі.</div>
 <div class="mag" style="left:190.6px;top:531.1px">негізгі</div>
 <div class="mag" style="left:444.6px;top:531.1px">туынды</div>
 <svg class="abs" style="left:0;top:0" width="653" height="700" viewBox="0 0 653 700">
  <ellipse cx="223.9" cy="616" rx="118.2" ry="48" fill="none" stroke="#6aa84f" stroke-width="1.1"/>
  <ellipse cx="484.3" cy="616" rx="118.3" ry="48" fill="none" stroke="#6aa84f" stroke-width="1.1"/>
 </svg>
 
 <svg class="abs" style="left:46.5px;top:149.8px" width="40" height="40" viewBox="-20 -20 40 40">
  <defs>
   <linearGradient id="org" x1="0" y1="0" x2="0" y2="1"><stop offset="0" stop-color="#c8902c"/><stop offset=".5" stop-color="#c77a2a"/><stop offset="1" stop-color="#b03f22"/></linearGradient>
   <radialGradient id="ring2" cx=".5" cy=".5" r=".5"><stop offset=".76" stop-color="#c9bfc2"/><stop offset=".83" stop-color="#f2eeef"/><stop offset=".90" stop-color="#fcfbfb"/><stop offset=".95" stop-color="#ece8e9"/><stop offset=".985" stop-color="#ddd6d9"/><stop offset="1" stop-color="#e6dde0" stop-opacity=".3"/></radialGradient>
  </defs>
  <circle r="16.4" fill="url(#ring2)"/>
  <circle r="12.8" fill="url(#org)"/>
  <g fill="#f6ead8">
   <circle cx="4.2" cy="-3.6" r="2.6"/>
   <path d="M-0.5,6.2 Q0,-0.4 4.4,-0.4 Q8.6,-0.4 9,5 Q6,6.6 -0.5,6.2Z"/>
  </g>
  <g fill="#fffaf0">
   <circle cx="-2.6" cy="-4.4" r="3.3"/>
   <path d="M-9.2,6.6 Q-8.6,-0.6 -2.6,-0.6 Q3.4,-0.6 4,6.6 Q-2.6,8 -9.2,6.6Z"/>
  </g>
 </svg>
 <svg class="abs" style="left:46.5px;top:204.2px" width="40" height="40" viewBox="-20 -20 40 40">
  <defs>
   <linearGradient id="blg" x1="0" y1="0" x2="0" y2="1"><stop offset="0" stop-color="#5070c4"/><stop offset=".5" stop-color="#3f55ae"/><stop offset="1" stop-color="#30359a"/></linearGradient>
  </defs>
  <circle r="16.4" fill="url(#ring2)"/>
  <circle r="12.8" fill="url(#blg)"/>
  <g fill="#e8ecf8">
   <circle cx="-6" cy="-1.6" r="2.1"/><path d="M-10,5 Q-9.6,0.8 -6,0.8 Q-3.4,0.8 -2.8,3 L-3.4,5Z"/>
   <circle cx="6" cy="-1.6" r="2.1"/><path d="M10,5 Q9.6,0.8 6,0.8 Q3.4,0.8 2.8,3 L3.4,5Z"/>
  </g>
  <g fill="#fff"><circle cx="0" cy="-2.8" r="2.8"/><path d="M-5.2,6.2 Q-4.8,0.4 0,0.4 Q4.8,0.4 5.2,6.2 Q0,7.2 -5.2,6.2Z"/></g>
 </svg>
 <svg class="abs" style="left:45.2px;top:445.9px" width="40" height="40" viewBox="-20 -20 40 40">
  <defs>
   <linearGradient id="grg" x1="0" y1="0" x2="0" y2="1"><stop offset="0" stop-color="#7cb052"/><stop offset=".5" stop-color="#5f9a3c"/><stop offset="1" stop-color="#3f7a2a"/></linearGradient>
  </defs>
  <circle r="15.2" fill="url(#ring2)"/>
  <circle r="11.9" fill="url(#grg)"/>
  <g fill="#fff"><circle cx="-1.6" cy="-3.4" r="3.1"/><path d="M-7.6,6.4 Q-7.2,0 -1.6,0 Q4,0 4.4,6.4 Q-1.6,7.6 -7.6,6.4Z"/></g>
  <text x="3.6" y="0.5" font-family="Liberation Sans,sans-serif" font-size="8" font-weight="bold" fill="#fff">?</text>
 </svg>

</div>

<div class="abs" style="left:1279px;top:0;width:17px;height:574px;background:#f1f1f1"></div>
<svg class="ic" style="left:1279px;top:0" width="17" height="574" viewBox="1335 186 17 574"><path d="M1340,196.4 L1343.6,192.2 L1347.2,196.4Z" fill="#505050"/><path d="M1340,749.4 L1343.6,753.6 L1347.2,749.4Z" fill="#505050"/><rect x="1337" y="486" width="12.7" height="16.8" fill="#c1c1c1"/></svg>


  </div>
 </div>
</div>

<!-- left strip (Word window behind) -->
<div class="abs" style="left:0;top:40px;width:7px;height:26px;background:#fafbfc"></div>
<div class="abs" style="left:0;top:40px;width:7px;height:30px;overflow:hidden"><div class="abs" style="left:1.5px;top:3px;width:9px;height:15.6px;border:1.2px solid #3a66b8;border-radius:4px 0 0 0;background:#e8effb"></div><div class="abs" style="left:4.4px;top:7px;width:4px;height:9px;background:linear-gradient(180deg,#6a9be8,#2a5cc0)"></div></div>
<div class="abs" style="left:0;top:65px;width:7px;height:23px;background:linear-gradient(180deg,#3d6fd0,#1f4fb0);border-top-left-radius:3px"></div>
<div class="abs" style="left:0;top:88px;width:7px;height:85px;background:linear-gradient(180deg,#f3f4f6,#e6e8ec 60%,#d4d7dc)"></div>
<div class="abs" style="left:0;top:173px;width:7px;height:28px;background:#c9ccd2;border-top:1px solid #8e929a;border-bottom:1px solid #8e929a"></div>
<div class="abs" style="left:5px;top:178px;width:3px;height:17px;border:1px solid #7f838b;border-right:0;background:#e3e5e9"></div>
<div class="abs" style="left:0;top:201px;width:7px;height:545px;background:linear-gradient(90deg,#c3c6cc,#b6b9c0)"></div>
<div class="abs" style="left:5.4px;top:201px;width:1px;height:545px;background:#8b8f97"></div>
<div class="abs" style="left:0;top:745px;width:7px;height:16px;background:#c8cbd0;border-top:1px solid #8b8f97"></div>
<!-- bottom strip -->
<div class="abs" style="left:105px;top:761px;width:1px;height:7px;background:#8b8e92"></div>
<div class="abs" style="left:208px;top:761px;width:1px;height:7px;background:#8b8e92"></div>
<div class="abs" style="left:311px;top:761px;width:1px;height:7px;background:#8b8e92"></div>
<div class="abs" style="left:219px;top:760.6px;width:7px;height:2.4px;border-radius:0 0 4px 4px;background:#2a50b8"></div>
<div class="abs" style="left:1088px;top:761px;width:1px;height:7px;background:#8b8e92"></div>
<div class="abs" style="left:1093.5px;top:761px;width:17px;height:6px;background:#f4dc6a;border:1px solid #7a6c2c;border-top:0"></div>
<!-- right strip -->
<div class="abs" style="left:1353px;top:40px;width:13px;height:49px;background:linear-gradient(90deg,#e9e9ea,#fbfbfb 50%,#ffffff)"></div>
<svg class="ic" style="left:1353px;top:40px;overflow:hidden" width="13" height="728" viewBox="1353 40 13 728">
 <defs><linearGradient id="hq" x1="0" y1="0" x2="0" y2="1"><stop offset="0" stop-color="#5a8ae0"/><stop offset="1" stop-color="#2a57b8"/></linearGradient>
 <linearGradient id="rsg" x1="0" y1="0" x2="1" y2="0"><stop offset="0" stop-color="#d9dbe0"/><stop offset="1" stop-color="#f1f2f4"/></linearGradient><linearGradient id="thg" x1="0" y1="0" x2="1" y2="0"><stop offset="0" stop-color="#c6c9d0"/><stop offset="1" stop-color="#d4d6dc"/></linearGradient></defs>
 <circle cx="1355.8" cy="75.8" r="7.4" fill="url(#hq)"/>
 <text x="1355.6" y="80.2" text-anchor="middle" font-family="Liberation Sans,sans-serif" font-weight="bold" font-size="11.5" fill="#f4f4f4">?</text>
 <rect x="1353" y="89" width="13" height="86" fill="url(#rsg)"/>
 <rect x="1353" y="88" width="13" height="1" fill="#7d878e"/>
 <rect x="1353" y="174" width="13" height="28" fill="#c6c9cf"/>
 <rect x="1353" y="174" width="13" height="1" fill="#9a9da5"/>
 <path d="M1353,181 H1362" stroke="#5e626a" stroke-width="1.5"/>
 <rect x="1352.5" y="185.4" width="12.8" height="15" fill="#d2d5da" stroke="#7a7e86" stroke-width="1"/>
 <path d="M1354,187.6 H1357 V190 H1362 V197.4 H1356.4 V190.6 M1354.6,188.4 L1356.6,190.4 M1358.4,195 L1359.4,197 L1360.4,195" stroke="#5a5e66" stroke-width=".9" fill="#e8dfe2"/>
 <path d="M1353,213 L1357.6,207.4 L1362.2,213Z" fill="#3c3c40"/>
 <rect x="1353.4" y="396.4" width="11" height="69.6" rx="1.2" fill="url(#thg)" stroke="#6e727c" stroke-width=".9"/>
 <path d="M1353.6,428.4 H1361 M1353.6,430.4 H1361 M1353.6,432.4 H1361 M1353.6,434.4 H1361" stroke="#5e626a" stroke-width=".8"/>
 <path d="M1353.2,683 L1357.4,688 L1361.8,683Z" fill="#3c3c40"/>
 <rect x="1353" y="692.6" width="13" height="1" fill="#a9acb2"/>
 <path d="M1354.8,700.4 L1357.4,697.6 L1360,700.4Z M1354.8,704 L1357.4,701.2 L1360,704Z" fill="#3c3c40"/>
 <circle cx="1357.4" cy="718.5" r="3.1" fill="none" stroke="#55585e" stroke-width=".9"/>
 <path d="M1354.8,733.6 L1357.4,736.4 L1360,733.6Z M1354.8,737.2 L1357.4,740 L1360,737.2Z" fill="#3c3c40"/>
 <rect x="1353" y="745" width="13" height="1" fill="#9a9da3"/>
 <rect x="1353" y="746" width="13" height="22" fill="#c8cace"/>
 <circle cx="1355" cy="755.8" r="6.4" fill="#d9dbde" stroke="#7e8187" stroke-width=".9"/>
 <path d="M1353,755.8 H1359.4 M1356,752.4 V759.2" stroke="#3a3a3e" stroke-width="1.6"/>
</svg>

</div>
</body>
</html>
